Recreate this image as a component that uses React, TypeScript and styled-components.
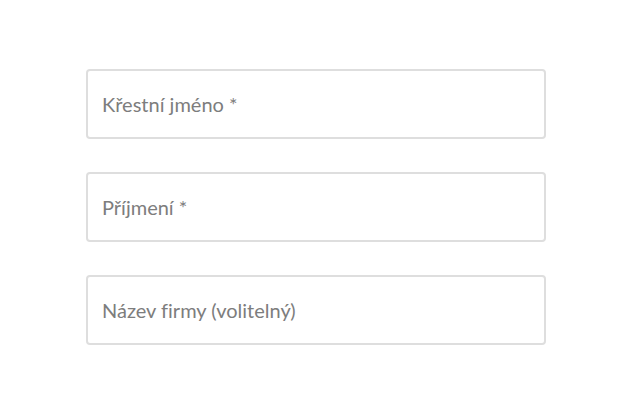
import React from "react";
import styled, { createGlobalStyle } from "styled-components";

const GlobalStyle = createGlobalStyle`
  body {
    margin: 0;
    background: #fff;
    font-family: "Lato", "Noto Sans", sans-serif;
  }
`;

const Form = styled.form`
  display: flex;
  flex-direction: column;
  gap: 33px;
  width: 460px;
  margin-left: 86px;
  padding-top: 69px;
`;

const Field = styled.input`
  box-sizing: border-box;
  height: 70px;
  width: 100%;
  padding: 0 14px;
  border: 2px solid #dedede;
  border-radius: 4px;
  background: #fff;
  font-family: "Lato", "Noto Sans", sans-serif;
  font-size: 20px;
  font-variant-ligatures: none;
  color: #333;
  outline: none;

  &::placeholder {
    color: #7d7d7d;
  }
`;

const fields = ["Křestní jméno *", "Příjmení *", "Název firmy (volitelný)"];

export default function App() {
  return (
    <>
      <GlobalStyle />
      <Form>
        {fields.map((label) => (
          <Field key={label} placeholder={label} />
        ))}
      </Form>
    </>
  );
}
